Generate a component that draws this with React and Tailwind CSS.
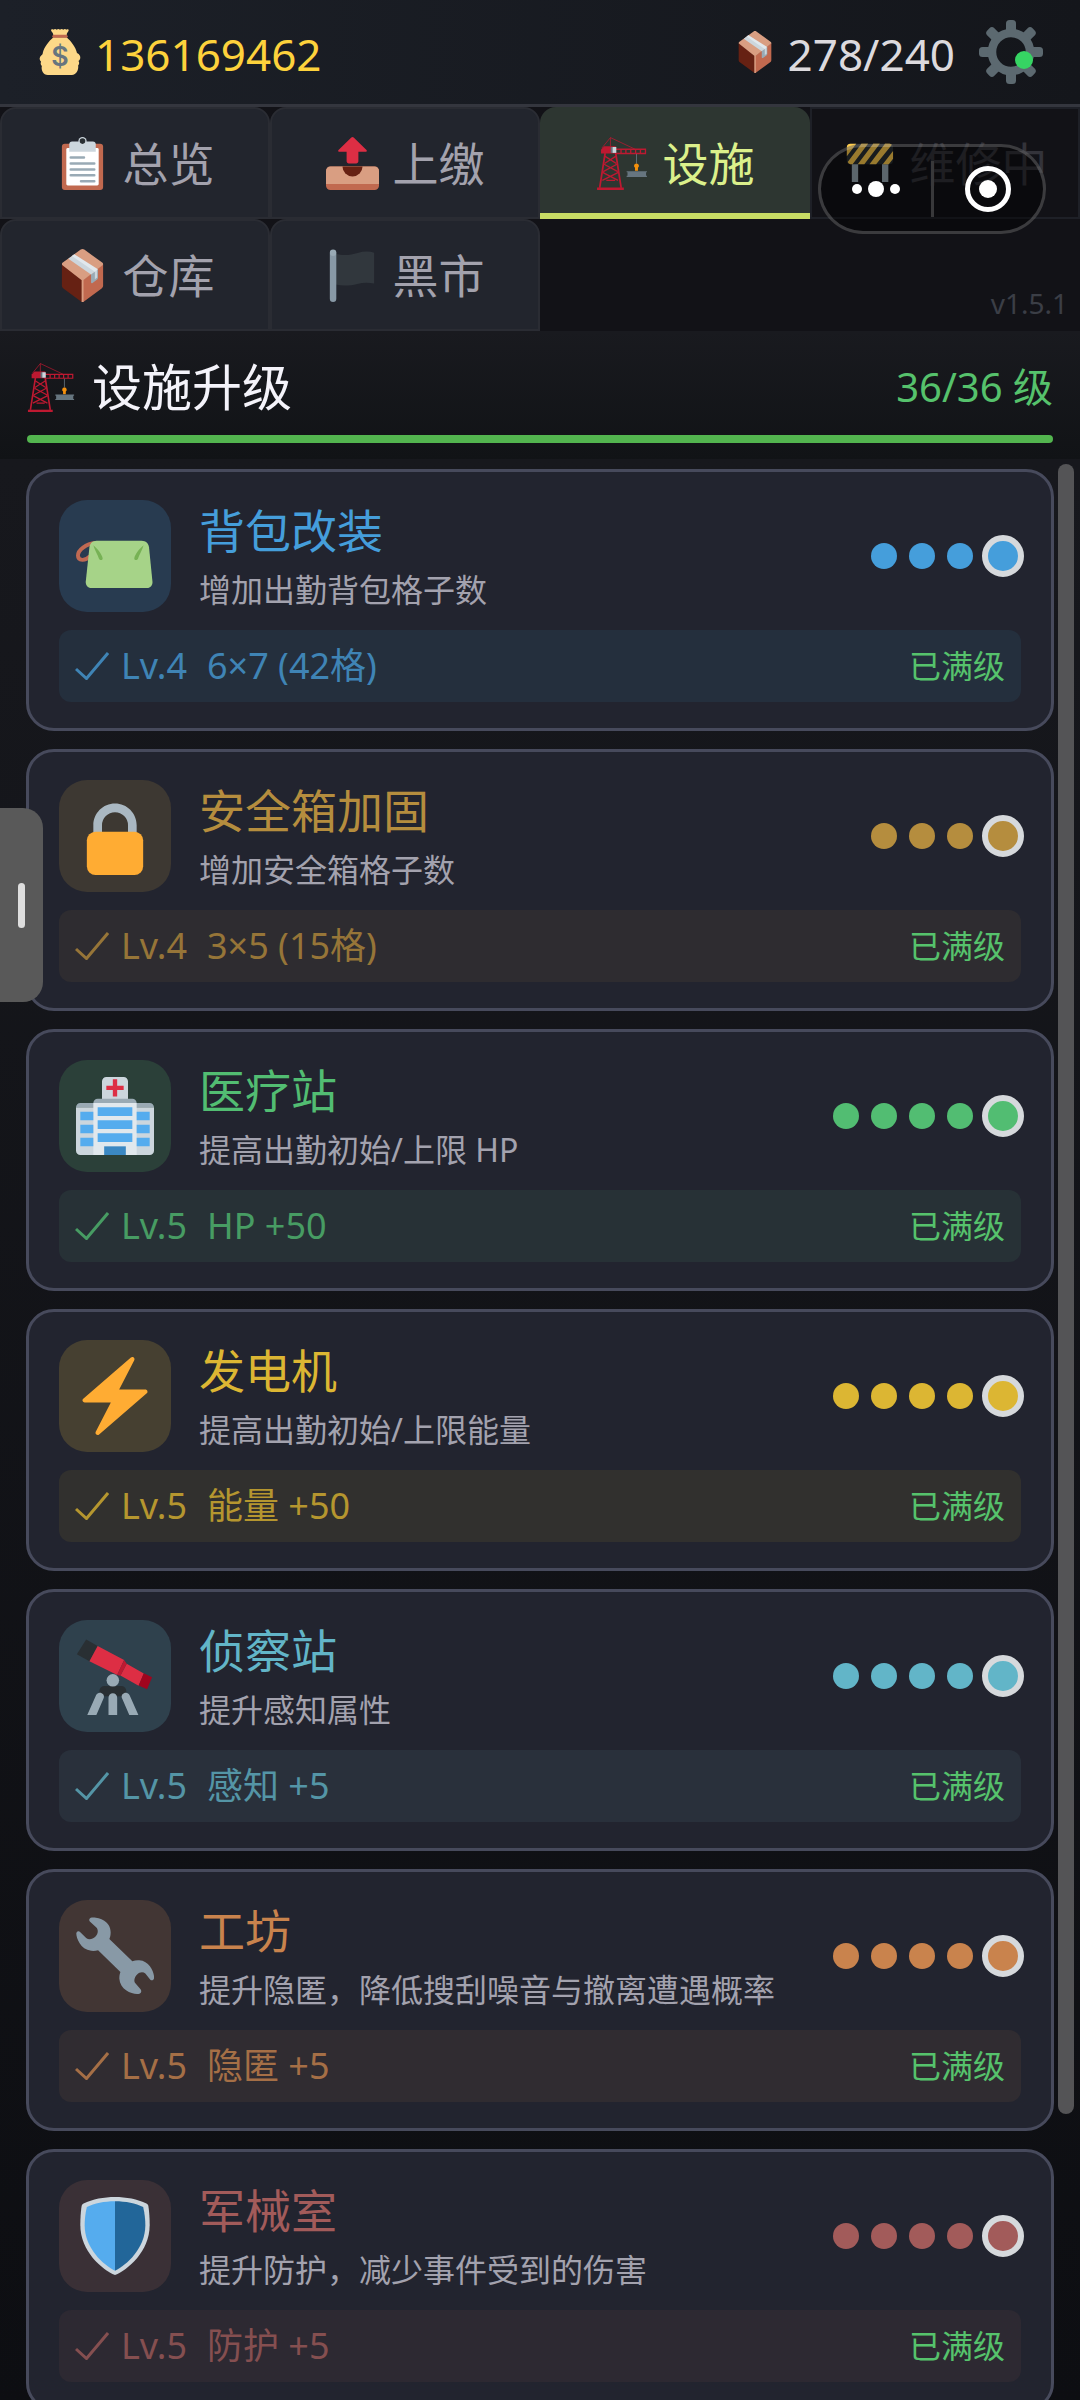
import React, { useState } from 'react';
import clsx from 'clsx';

function MoneyBagIcon({ className }) {
  return (
    <svg viewBox="0 0 36 36" className={className} aria-hidden="true">
      <path fill="#FDD888" d="M11 1c0-.9 1.200-1 2-.5.800-.7 1.800-.5 2.400 0 .8-.6 1.800-.6 2.600 0 .8-.6 1.800-.6 2.600 0 .6-.5 1.600-.7 2.400 0 .8-.5 1.800-.3 1.800.5 0 1.200-1.600 2-1.600 3.700h-10.400C12.800 3 11 2.200 11 1z" />
      <path fill="#FDD888" d="M12.800 6.500h10.400c3.600 3.300 7 7.500 8.100 12.300 2 1 3 2.700 2.500 4.300-.2.900-.8 1.500-1.300 1.900.8 1.200.6 2.600-.3 3.600.6 3-1.300 7.400-5 7.400H8.500c-3.700 0-5.500-4.300-4.700-7.100-1-.9-1.200-2.100-.6-3.200-1.600-1.400-1.500-3.900.3-5.200.7-.4 1-.9 1-1.700C5.600 14 9.200 9.800 12.800 6.500z" />
      <rect x="12" y="4.500" width="12" height="2.400" rx="1.200" fill="#C1694F" />
      <text x="18" y="29" textAnchor="middle" fontFamily="Inter, sans-serif" fontSize="21" fontWeight="600" fill="#67757F">$</text>
    </svg>
  );
}

function PackageIcon({ className }) {
  return (
    <svg viewBox="0 0 36 36" className={className} aria-hidden="true">
      <path fill="#662113" d="M4 10.200l14 11.200V36c-.4 0-.7-.1-1-.4L5 26.800c-.6-.5-1-1.100-1-1.800z" />
      <path fill="#C1694F" d="M32 10.200L18 21.400V36c.4 0 .7-.1 1-.4l12-8.800c.6-.5 1-1.100 1-1.800z" />
      <path fill="#D99E82" d="M4.400 9.400L16.800.4c.7-.5 1.700-.5 2.400 0l12.400 9c.5.4.5 1.200 0 1.600L19.200 20.800c-.7.600-1.700.600-2.400 0L4.400 11c-.5-.4-.5-1.200 0-1.600z" />
      <path fill="#D99E82" d="M17.400 20.500h1.300V36h-1.300z" />
      <path fill="#99AAB5" d="M23.800 17.200l4.700-3.700v6.200c0 .4-.2.800-.5 1l-3.200 2.400c-.4.300-1 .1-1-.4z" />
      <path fill="#CCD6DD" d="M8.400 6.600l3.900-2.900L28 14.300v5.100l-1.600 1.200v-5.200l-2.600 2z" />
      <path fill="#E1E8ED" d="M10.800 4.800l1.600-1.200 16.100 10.200-2.100 1.600z" />
    </svg>
  );
}

function GearIcon({ className }) {
  return (
    <svg viewBox="0 0 64 64" className={className} aria-hidden="true">
      <g fill="#5C6970">
        {[0, 45, 90, 135].map((deg) => (
          <g key={deg} transform={`rotate(${deg} 32 32)`}>
            <rect x="27" y="0" width="10" height="15" rx="3.500" />
            <rect x="27" y="49" width="10" height="15" rx="3.500" />
          </g>
        ))}
      </g>
      <circle cx="32" cy="32" r="19" fill="none" stroke="#5C6970" strokeWidth="8.500" />
    </svg>
  );
}

function ClipboardIcon({ className }) {
  return (
    <svg viewBox="0 0 36 36" className={className} aria-hidden="true">
      <rect x="4" y="4.500" width="28" height="31.500" rx="2" fill="#C1694F" />
      <rect x="7" y="7.500" width="22" height="25.500" rx="1" fill="#fff" />
      <circle cx="18" cy="2.800" r="2.800" fill="#CCD6DD" />
      <path fill="#CCD6DD" d="M11 3h14a2 2 0 012 2v5H9V5a2 2 0 012-2z" />
      <circle cx="18" cy="2.800" r="1.900" fill="#292F33" />
      <path stroke="#99AAB5" strokeWidth="1.700" strokeLinecap="round" d="M10 14h9M10 18h16M10 22h16M10 26h16M17 30h9" />
    </svg>
  );
}

function OutboxIcon({ className }) {
  return (
    <svg viewBox="0 0 36 36" className={className} aria-hidden="true">
      <path fill="#DD2E44" d="M17.200.4c.5-.5 1.100-.5 1.600 0l8.700 8.400c.5.500.2 1.200-.5 1.200h-5v6.500c0 .8-.7 1.500-1.500 1.500h-5c-.8 0-1.500-.7-1.500-1.500V10H9c-.7 0-1-.7-.5-1.200z" />
      <rect y="20" width="36" height="16" rx="3" fill="#C1694F" />
      <path fill="#D99E82" d="M3 20h30a3 3 0 013 3v9H0v-9a3 3 0 013-3z" />
      <path fill="#662113" d="M11.200 20h13.600a6.800 6.800 0 01-13.600 0z" />
    </svg>
  );
}

function CraneIcon({ className }) {
  return (
    <svg viewBox="0 0 36 36" className={className} aria-hidden="true">
      <g fill="none" stroke="#BE1931">
        <path strokeWidth=".5" d="M9.800.4L4 7.500M9.800.4v6M9.800.4l17 8" />
        <path strokeWidth=".9" d="M13 8.300h20.600v2.900H13M17 8.300v2.900M20.300 8.300v2.900M23.600 8.300v2.900M26.900 8.300v2.900M30.200 8.300v2.900" />
        <path strokeWidth="1.200" d="M6.200 11L2.500 34.500M13.400 11L17.100 34.500" />
        <path strokeWidth=".9" d="M6 13l7.800 5M13.600 13l-7.800 5M5.500 18.500l9.300 5M14.200 18.500l-9.300 5M4.500 24l10.500 5.500M15.200 24L4.300 29.500M7 29.500h6" />
      </g>
      <path fill="#BE1931" d="M3.400 8.500l2.200-2.300h7.800v5H3.400z" />
      <path fill="#BE1931" d="M.7 34.300h18.200V36H.7z" />
      <path fill="#66757F" d="M10 6.800h2v4h-2z" />
      <path fill="#CCD6DD" d="M11.300 6.800h2.500v4h-2.500z" />
      <path stroke="#66757F" strokeWidth=".6" d="M27.500 11.500V18" />
      <path fill="#F4900C" d="M27.500 18a1.600 1.600 0 011 2.900v2.100h-2v-2.100a1.600 1.600 0 011-2.900z" />
      <path fill="#66757F" d="M20.800 23.200h13.800v.8H34v2.400h.6v.8H20.800v-.8h.6V24h-.6z" />
    </svg>
  );
}

function BarrierIcon({ className }) {
  return (
    <svg viewBox="0 0 36 36" className={className} aria-hidden="true">
      <path fill="#99AAB5" d="M6 18h4.300v12.500H6zM26.500 18h4.300v12.500h-4.300z" />
      <rect x="2.600" y="4.500" width="31.400" height="14" rx="2.500" fill="#292F33" />
      <path fill="#FFCC4D" d="M5 4.500h4L2.600 13V7a2.500 2.500 0 012.400-2.500zM12.500 4.500h4.500L6.500 18.500H5a2.500 2.500 0 01-1.800-1.600zM20.500 4.500H25L14.500 18.500H10zM28.500 4.500h3a2.500 2.500 0 011.700.7L22.500 18.500H18zM34 9.500v5.300l-2.900 3.700H27z" />
    </svg>
  );
}

function BlackFlagIcon({ className }) {
  return (
    <svg viewBox="0 0 36 36" className={className} aria-hidden="true">
      <path fill="#31373D" d="M6.500 3.300c6 1.600 10.500.6 15-.6 4-1.200 8-1.300 11.200-.2v21c-4-1-7.500-.8-11.500.2-4.500 1.100-9.500 1.500-14.700.4z" />
      <path fill="#8899A6" d="M7 33.800a2.200 2.200 0 01-4.400 0V3a2.200 2.200 0 014.400 0z" />
      <circle cx="4.800" cy="2.600" r="2.200" fill="#99AAB5" />
    </svg>
  );
}

function PouchIcon({ className }) {
  return (
    <svg viewBox="0 0 36 36" className={className} aria-hidden="true">
      <path fill="none" stroke="#BF6952" strokeWidth="1.800" d="M9 12C4.500 12.400.9 15.300.9 17.800c0 2.600 3.400 2.600 5.600.3" />
      <path fill="#A6D388" d="M9.500 11h20.800c1.900 0 3.200 1.300 3.400 3l1.600 15.900c.1 1.700-1 2.900-2.500 2.900H7c-1.500 0-2.600-1.200-2.500-2.900L6.200 14c.2-1.700 1.400-3 3.300-3z" />
      <path fill="#77B255" d="M8 13c2 1.700 3.900 4 4.300 6 .1 1-1.300 1.200-1.700.3C10 17.300 8.600 15.200 8 13zM31.200 13c-2 1.700-3.900 4-4.300 6-.1 1 1.300 1.200 1.700.3.600-2 2-4.100 2.600-6.300z" />
    </svg>
  );
}

function LockIcon({ className }) {
  return (
    <svg viewBox="0 0 36 36" className={className} aria-hidden="true">
      <path fill="#AAB8C2" d="M18 3C12.477 3 8 7.477 8 13v6h4v-6a6 6 0 0112 0v6h4v-6c0-5.523-4.477-10-10-10z" />
      <path fill="#FFAC33" d="M31 32a4 4 0 01-4 4H9a4 4 0 01-4-4V20a4 4 0 014-4h18a4 4 0 014 4z" />
    </svg>
  );
}

function HospitalIcon({ className }) {
  return (
    <svg viewBox="0 0 36 36" className={className} aria-hidden="true">
      <path fill="#CCD6DD" d="M14 0h8a2 2 0 012 2v10H12V2a2 2 0 012-2zM0 14h36v20a2 2 0 01-2 2H2a2 2 0 01-2-2z" />
      <path fill="#9AAAB4" d="M2 12h32a2 2 0 012 2H0a2 2 0 012-2zM10 10h16a2 2 0 012 2H8a2 2 0 012-2z" />
      <path fill="#E1E8ED" d="M8 12h20v24H8z" />
      <path fill="#55ACEE" d="M10 14h16v4H10zM10 20h16v4H10zM10 26h16v4H10zM2 16h6v4H2zM2 22h6v4H2zM2 28h6v4H2zM28 16h6v4h-6zM28 22h6v4h-6zM28 28h6v4h-6z" />
      <path fill="#3B88C3" d="M13 32h10v4H13z" />
      <path fill="#DD2E44" d="M17 1h2v3h3v2h-3v3h-2V6h-3V4h3z" />
    </svg>
  );
}

function BoltIcon({ className }) {
  return (
    <svg viewBox="0 0 36 36" className={className} aria-hidden="true">
      <path fill="#FFAC33" d="M32.938 15.651C32.792 15.260 32.418 15 32 15H19.925L26.890 1.458c.219-.426.106-.947-.271-1.243C26.437.071 26.218 0 26 0c-.233 0-.466.082-.653.243L18 6.588 3.347 19.243c-.316.273-.43.714-.284 1.105S3.582 21 4 21h12.075L9.110 34.542c-.219.426-.106.947.271 1.243.182.144.401.215.619.215.233 0 .466-.082.653-.243L18 29.412l14.653-12.655c.317-.273.430-.714.285-1.106z" />
    </svg>
  );
}

function TelescopeIcon({ className }) {
  return (
    <svg viewBox="0 0 36 36" className={className} aria-hidden="true">
      <rect x="10.800" y="22.600" width="12.400" height="4.700" rx="2.300" fill="#292F33" />
      <path fill="#99AAB5" d="M9.200 27c1-2.400 4.400-1.100 3.600 1.200L9.400 36H5.200zM15 28a2 2 0 014 0v8h-4zM24.800 27c-1-2.400-4.400-1.100-3.600 1.200l3.400 7.800h4.200z" />
      <circle cx="17" cy="20" r="2.900" fill="#99AAB5" />
      <path fill="#292F33" d="M4.700 1.100l5.300 3.100-3.800 7L.4 8z" />
      <path fill="#DD2E44" d="M10 4.200l12.200 6.400-3.200 6.900-12.800-6.300zM23.400 12.300l7.900 4.500-2.400 5.700-8.400-4.700z" />
      <path fill="#BE1931" d="M22.200 10.600l1.200 1.700-2.900 5.600-1.500-.4z" />
      <path fill="#A0041E" d="M31.300 16.700l3.800 1.900-2.300 5.500-3.900-1.700z" />
    </svg>
  );
}

function WrenchIcon({ className }) {
  return (
    <svg viewBox="0 0 36 36" className={className} aria-hidden="true">
      <path fill="#8899A6" d="M6.800.4C8.500-.4 16 1 16 7c0 1.200-.2 2.200-.6 3.200L26 20.400c1-.3 2-.5 3.200-.4 5.300.3 7.400 7 6.700 8.600-.3.800-1.200.8-1.700.2L32 26.100c-1-.9-2.700-.7-3.800.4s-1.700 2.900-.9 4l2.500 2.900c.6.8.3 1.700-.5 2C27 36.200 20.300 34 20 28.500c0-1.100.1-2.100.5-3.100L10.200 15.300c-1 .3-2.100.4-3.200.3C1.500 15-.2 8.500.2 7.300c.3-.9 1.200-1 1.800-.3l2.700 2.700c1.200 1 3 .6 4.200-.6s1.600-3 .5-4.200L6.500 2.200C5.900 1.600 6 .8 6.800.4z" />
    </svg>
  );
}

function ShieldIcon({ className }) {
  return (
    <svg viewBox="0 0 36 36" className={className} aria-hidden="true">
      <path fill="#CCD6DD" d="M18 0c5 0 10.500 1 14.500 3 .5.300.8.600.9 1.200C34 8 34 12 34 13c0 12-10 20.500-16 23C12 33.500 2 25 2 13c0-1 0-5 .6-8.800.1-.6.4-.9.9-1.200C7.500 1 13 0 18 0z" />
      <path fill="#55ACEE" d="M18 2C13 2 8.500 3 5 4.600 4.200 8 4 11 4 13c0 10.500 8.500 18.300 14 21z" />
      <path fill="#226699" d="M18 2c5 0 9.500 1 13 2.600.8 3.400 1 6.400 1 8.400 0 10.500-8.500 18.300-14 21z" />
    </svg>
  );
}

const tabs = [
  { id: 'overview', label: '总览', Icon: ClipboardIcon },
  { id: 'submit', label: '上缴', Icon: OutboxIcon },
  { id: 'facility', label: '设施', Icon: CraneIcon },
  { id: 'repair', label: '维修中', Icon: BarrierIcon, disabled: true },
  { id: 'storage', label: '仓库', Icon: PackageIcon },
  { id: 'market', label: '黑市', Icon: BlackFlagIcon },
];

const facilities = [
  {
    name: '背包改装', desc: '增加出勤背包格子数', level: 4, effect: '6×7 (42格)', Icon: PouchIcon,
    text: 'text-[#459edb]', dot: 'bg-[#459edb]', tile: 'bg-[#283b50]', bar: 'bg-[#242f3d]', effectText: 'text-[#3f84b5]',
  },
  {
    name: '安全箱加固', desc: '增加安全箱格子数', level: 4, effect: '3×5 (15格)', Icon: LockIcon,
    text: 'text-[#b58d3e]', dot: 'bg-[#b58d3e]', tile: 'bg-[#3d3832]', bar: 'bg-[#2e2c30]', effectText: 'text-[#967538]',
  },
  {
    name: '医疗站', desc: '提高出勤初始/上限 HP', level: 5, effect: 'HP +50', Icon: HospitalIcon,
    text: 'text-[#52bd72]', dot: 'bg-[#52bd72]', tile: 'bg-[#2b4039]', bar: 'bg-[#273136]', effectText: 'text-[#479c63]',
  },
  {
    name: '发电机', desc: '提高出勤初始/上限能量', level: 5, effect: '能量 +50', Icon: BoltIcon,
    text: 'text-[#dcb633]', dot: 'bg-[#dcb633]', tile: 'bg-[#464031]', bar: 'bg-[#31302e]', effectText: 'text-[#b5962f]',
  },
  {
    name: '侦察站', desc: '提升感知属性', level: 5, effect: '感知 +5', Icon: TelescopeIcon,
    text: 'text-[#62b5c8]', dot: 'bg-[#62b5c8]', tile: 'bg-[#2f414d]', bar: 'bg-[#29303b]', effectText: 'text-[#5495a6]',
  },
  {
    name: '工坊', desc: '提升隐匿，降低搜刮噪音与撤离遭遇概率', level: 5, effect: '隐匿 +5', Icon: WrenchIcon,
    text: 'text-[#c9834d]', dot: 'bg-[#c9834d]', tile: 'bg-[#423634]', bar: 'bg-[#302c31]', effectText: 'text-[#a56f46]',
  },
  {
    name: '军械室', desc: '提升防护，减少事件受到的伤害', level: 5, effect: '防护 +5', Icon: ShieldIcon,
    text: 'text-[#a25b5a]', dot: 'bg-[#a25b5a]', tile: 'bg-[#3a3036]', bar: 'bg-[#2d2932]', effectText: 'text-[#854f50]',
  },
];

function TopBar() {
  return (
    <header className="flex h-[107px] shrink-0 items-center justify-between border-b-[3px] border-[#34363e] bg-gradient-to-r from-[#1c2028] to-[#14161b] px-[37px]">
      <div className="flex items-center gap-3">
        <MoneyBagIcon className="h-[46px] w-[46px]" />
        <span className="pt-1 text-[44px] leading-[60px] text-[#fdd23c]">136169462</span>
      </div>
      <div className="flex items-center">
        <PackageIcon className="h-[42px] w-[42px]" />
        <span className="ml-3 pt-1 text-[44px] leading-[60px] text-[#dcdade]">278/240</span>
        <button type="button" aria-label="设置" className="relative ml-6">
          <GearIcon className="h-16 w-16" />
          <span className="absolute right-[10px] bottom-[15px] h-[18px] w-[18px] rounded-full bg-[#36d463]" />
        </button>
      </div>
    </header>
  );
}

function TabBar({ active, onSelect }) {
  return (
    <nav className="grid shrink-0 grid-cols-4 bg-[#121217]">
      {tabs.map(({ id, label, Icon, disabled }) => (
        <button
          key={id}
          type="button"
          disabled={disabled}
          onClick={() => onSelect(id)}
          className={clsx(
            'flex h-28 items-center justify-center gap-[14px] text-[46px] leading-[60px]',
            disabled && 'border-2 border-[#1e2027] text-[#33333a]',
            !disabled && active === id && 'rounded-t-2xl border-t-[6px] border-b-[6px] border-t-transparent border-b-[#c8dc64] bg-[#2d3631] text-[#dbf08b]',
            !disabled && active !== id && 'rounded-t-2xl border-2 border-[#2a2c33] bg-[#22252d] text-[#a3a2ad]'
          )}
        >
          <Icon className="h-[53px] w-[53px] shrink-0" />
          <span>{label}</span>
        </button>
      ))}
      <span className="col-span-2 self-end pr-3 pb-2 text-right text-[28px] leading-[40px] text-[#3b3e46]">v1.5.1</span>
    </nav>
  );
}

function LevelDots({ level, dot }) {
  return (
    <div className="flex items-center gap-3" role="img" aria-label={`等级 ${level}`}>
      {Array.from({ length: level - 1 }, (_, i) => (
        <span key={i} className={clsx('h-[26px] w-[26px] rounded-full', dot)} />
      ))}
      <span className={clsx('-mx-[3px] h-[42px] w-[42px] rounded-full border-[6px] border-[#d6d9dc]', dot)} />
    </div>
  );
}

function FacilityCard({ item }) {
  const { name, desc, level, effect, Icon } = item;
  return (
    <li className="shrink-0 rounded-[28px] border-[3px] border-[#474a5c] bg-[#22242f] px-[30px] pt-7 pb-[26px]">
      <div className="flex items-center gap-7">
        <div className={clsx('flex h-28 w-28 shrink-0 items-center justify-center rounded-[28px]', item.tile)}>
          <Icon className="h-[78px] w-[78px]" />
        </div>
        <div className="flex-1">
          <h2 className={clsx('text-[46px] leading-[60px]', item.text)}>{name}</h2>
          <p className="mt-2 text-[32px] leading-[44px] text-[#a3a2ae]">{desc}</p>
        </div>
        <LevelDots level={level} dot={item.dot} />
      </div>
      <div className={clsx('mt-[18px] flex h-[72px] items-center rounded-xl px-4', item.bar)}>
        <div className={clsx('flex items-center text-[36px] leading-[48px]', item.effectText)}>
          <svg viewBox="0 0 34 28" className="mr-3 h-7 w-[34px]" fill="none" stroke="currentColor" strokeWidth="3" aria-hidden="true">
            <path d="M1 17l10.500 9.500L33 1" />
          </svg>
          <span>Lv.{level}</span>
          <span className="ml-5">{effect}</span>
        </div>
        <span className="ml-auto text-[32px] leading-[48px] text-[#56c26c]">已满级</span>
      </div>
    </li>
  );
}

// mini-program host controls floating above the page
function HostCapsule() {
  return (
    <div className="absolute top-36 right-[34px] flex h-[90px] w-[228px] items-center rounded-full border-[3px] border-white/20 bg-black/40">
      <button type="button" aria-label="更多" className="flex flex-1 items-center justify-center gap-[6px]">
        <span className="h-[10px] w-[10px] rounded-full bg-white" />
        <span className="h-4 w-4 rounded-full bg-white" />
        <span className="h-[10px] w-[10px] rounded-full bg-white" />
      </button>
      <span className="h-14 w-[3px] bg-[#38383a]" />
      <button type="button" aria-label="关闭" className="flex flex-1 items-center justify-center">
        <span className="flex h-[46px] w-[46px] items-center justify-center rounded-full border-[5px] border-white">
          <span className="h-[18px] w-[18px] rounded-full bg-white" />
        </span>
      </button>
    </div>
  );
}

export default function App() {
  const [active, setActive] = useState('facility');

  return (
    <div lang="zh-CN" className="relative flex h-screen flex-col overflow-hidden bg-[#0e0f13] font-['Noto_Sans','Noto_Sans_CJK_SC',sans-serif]">
      <TopBar />
      <TabBar active={active} onSelect={setActive} />

      <section className="shrink-0 bg-gradient-to-b from-[#191a1f] to-[#111316] px-[27px] pt-6 pb-4">
        <div className="flex h-16 items-center justify-between">
          <h1 className="flex items-center gap-4 text-[50px] leading-[64px] text-[#f4f3fa]">
            <CraneIcon className="h-[49px] w-[49px]" />
            设施升级
          </h1>
          <span className="text-[40px] leading-[64px] text-[#56c26c]">36/36 级</span>
        </div>
        <div className="mt-4 h-2 rounded-full bg-[#53b54f]" />
      </section>

      <main className="relative min-h-0 flex-1 bg-gradient-to-b from-[#17181d] to-[#0d0e12]">
        <ul className="flex h-full flex-col gap-[18px] overflow-y-auto px-[26px] pt-[10px] pb-6 [scrollbar-width:none]">
          {facilities.map((item) => (
            <FacilityCard key={item.name} item={item} />
          ))}
        </ul>
        <div className="absolute top-[5px] right-[6px] h-[85%] w-4 rounded-full bg-[#545456]" />
      </main>

      <button
        type="button"
        aria-label="展开侧栏"
        className="absolute top-[808px] left-0 flex h-[194px] w-[43px] items-center justify-center rounded-r-[20px] bg-[#595959]"
      >
        <span className="h-[45px] w-[7px] rounded-full bg-[#dedede]" />
      </button>
      <HostCapsule />
    </div>
  );
}
